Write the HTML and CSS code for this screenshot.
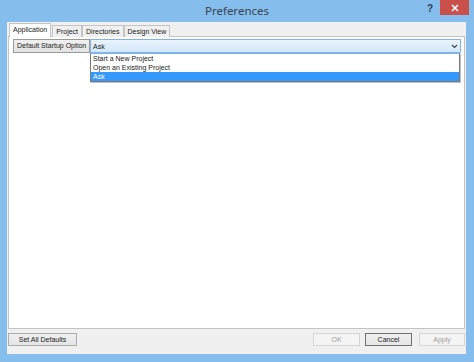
FILE: index.html
```html
<!DOCTYPE html>
<html>
<head>
<meta charset="utf-8">
<link rel="stylesheet" href="styles.css">
</head>
<body>
<div class="window">
  <div class="titlebar">
    <span class="title">Preferences</span>
    <div class="controls">
      <span class="help">?</span>
      <span class="close">
        <svg width="8" height="8" viewBox="0 0 8 8"><path d="M1 1L7 7M7 1L1 7" stroke="#fff" stroke-width="1.6"/></svg>
      </span>
    </div>
  </div>
  <div class="client">
    <div class="tabs">
      <span class="tab active">Application</span>
      <span class="tab">Project</span>
      <span class="tab">Directories</span>
      <span class="tab">Design View</span>
    </div>
    <div class="panel">
      <div class="row">
        <span class="label-btn">Default Startup Option</span>
        <div class="combo">
          <span class="combo-text">Ask</span>
          <svg class="chev" width="7" height="5" viewBox="0 0 7 5"><path d="M1 1L3.5 3.5L6 1" fill="none" stroke="#444" stroke-width="1.2"/></svg>
          <ul class="list">
            <li>Start a New Project</li>
            <li>Open an Existing Project</li>
            <li class="sel">Ask</li>
          </ul>
        </div>
      </div>
    </div>
    <div class="footer">
      <span class="btn wide">Set All Defaults</span>
      <span class="spacer"></span>
      <span class="btn disabled">OK</span>
      <span class="btn focus">Cancel</span>
      <span class="btn disabled apply">Apply</span>
    </div>
  </div>
</div>
</body>
</html>
```
FILE: styles.css
```css
* { box-sizing: border-box; }
html, body { margin: 0; padding: 0; }
body { width: 474px; height: 362px; overflow: hidden; font-family: "Liberation Sans", Arial, sans-serif; font-size: 7px; color: #1a1a1a; }
.window { width: 474px; height: 362px; background: #85bdec; display: flex; flex-direction: column; }
.titlebar { height: 22px; position: relative; display: flex; align-items: center; justify-content: center; flex: none; }
.title { font-family: "Noto Sans", "Open Sans", sans-serif; font-size: 11.5px; color: #3a4450; margin-top: -1px; }
.controls { position: absolute; right: 5px; top: 0; display: flex; align-items: flex-start; }
.help { font-family: "Liberation Sans", sans-serif; font-weight: bold; font-size: 10px; color: #2c3e58; margin-top: 3px; margin-right: 7px; }
.close { width: 29px; height: 15px; background: #c9504a; display: flex; align-items: center; justify-content: center; }
.client { flex: 1; margin: 0 8px 8px 7px; background: #f0f0f0; display: flex; flex-direction: column; padding: 1px 1px 0 1px; }
.tabs { display: flex; align-items: flex-end; padding-left: 2px; height: 14px; position: relative; z-index: 2; }
.tab { height: 12px; line-height: 11px; padding: 0 3px; border: 1px solid #c4c4c4; border-bottom: none; background: #f0f0f0; margin-right: 0; color: #1a1a1a; white-space: nowrap; }
.tab.active { height: 14px; background: #fff; border-color: #c4c4c4; padding: 0 3px; line-height: 12px; margin-left: -1px; margin-right: 1px; }
.panel { flex: 1; background: #fff; border: 1px solid #c4c4c4; margin-top: -1px; padding: 2px 2px 0 4px; position: relative; z-index: 1; }
.row { display: flex; height: 14px; }
.label-btn { width: 77px; height: 14px; border: 1px solid #9a9a9a; background: linear-gradient(#f0f0f0, #e3e3e3); line-height: 12px; padding-left: 3px; white-space: nowrap; overflow: hidden; }
.combo { flex: 1; position: relative; margin-right: 1px; height: 14px; border: 1px solid #7eb4ea; background: linear-gradient(#eaf4fd, #d2e7fb); display: flex; align-items: center; padding-left: 2px; }
.combo-text { flex: 1; }
.chev { margin-right: 2px; }
.list { position: absolute; left: -1px; right: 0; top: 13px; margin: 0; padding: 0; list-style: none; background: #fff; border: 1px solid #7a7a7a; border-top-color: #7eb4ea; box-shadow: 1px 1px 0 rgba(0,0,0,0.25); }
.list li { height: 9px; line-height: 9px; padding-left: 2px; }
.list li.sel { background: #3399ff; color: #fff; }
.footer { height: 25px; flex: none; display: flex; align-items: flex-start; padding-top: 4px; gap: 5px; }
.btn { width: 47px; height: 13px; border: 1px solid #acacac; background: linear-gradient(#f0f0f0, #e5e5e5); text-align: center; line-height: 11px; }
.btn.wide { width: 69px; }
.spacer { flex: 1; }
.btn.disabled { color: #a0a0a0; border-color: #d5d5d5; background: #f4f4f4; }
.btn.focus { border-color: #707070; }
.btn.apply { width: 46px; margin-left: 2px; }
```
